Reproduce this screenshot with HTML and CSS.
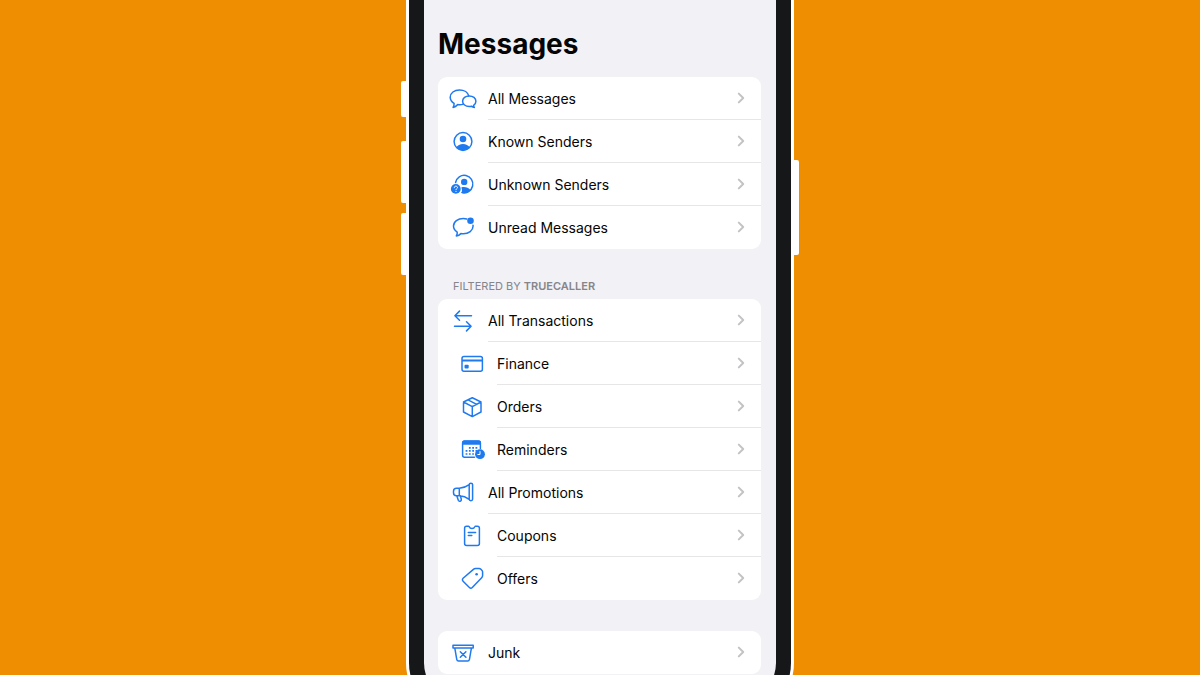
FILE: index.html
```html
<!DOCTYPE html>
<html lang="en">
<head>
<meta charset="utf-8">
<meta name="viewport" content="width=device-width, initial-scale=1">
<title>Messages</title>
<link rel="stylesheet" href="styles.css">
</head>
<body>
<svg class="defs" aria-hidden="true">
  <symbol id="chevron" viewBox="0 0 8 12"><path d="M1.8 1.6 6.2 6 1.8 10.4"/></symbol>
</svg>
<div class="phone">
  <span class="key key-mute"></span>
  <span class="key key-up"></span>
  <span class="key key-down"></span>
  <span class="key key-power"></span>
  <main class="screen">
    <h1 class="title">Messages</h1>

    <nav class="card" aria-label="Messages">
      <a class="row" href="#all">
        <svg class="icon" viewBox="0 0 28 28"><path d="M13.9 19.4c-1 .3-2.1.4-3.2.4-.7 0-1.400-.1-2-.2-1.2 1.2-2.7 2.300-4.600 2.800.8-1.200 1.100-2.700 1-4.100C2.700 16.900 1.200 14.700 1.200 12.200 1.200 8 5.300 4.900 10.500 4.900c4.700 0 8.500 2.500 9.200 6"/><path d="M20.200 10.900c3.800 0 6.700 2.300 6.700 5.300 0 1.700-.9 3.200-2.300 4.200 0 .8.300 1.500.8 2.100-1.200-.2-2.200-.7-3-1.300-.7.200-1.400.3-2.200.3-3.700 0-6.600-2.300-6.600-5.300s2.900-5.300 6.600-5.300z"/></svg>
        <span class="label">All Messages<svg class="chevron"><use href="#chevron"/></svg></span>
      </a>
      <a class="row" href="#known">
        <svg class="icon" viewBox="0 0 28 28"><circle cx="14" cy="13.500" r="8.900"/><circle class="solid" cx="14" cy="11" r="3.300"/><path class="solid" d="M7.300 19.500c1.200-2.200 3.800-3.500 6.700-3.500s5.500 1.300 6.700 3.500a9 9 0 0 1-13.400 0z"/></svg>
        <span class="label">Known Senders<svg class="chevron"><use href="#chevron"/></svg></span>
      </a>
      <a class="row" href="#unknown">
        <svg class="icon" viewBox="0 0 28 28"><path d="M6.600 11.500A8.700 8.700 0 1 1 13 21.500"/><circle class="solid" cx="15.200" cy="10.900" r="3.200"/><path class="solid" d="M12.300 16.400c3.400-.9 7.200.1 9.300 2.900a8.900 8.900 0 0 1-9.200 2.800c.8-1.800.8-3.900-.1-5.700z"/><circle class="solid" cx="6.800" cy="17.900" r="4.900"/><path class="knock" d="M5.300 16.700c0-1 .7-1.500 1.600-1.500s1.600.5 1.600 1.300c0 1-1.500 1.100-1.500 2.200M7 20.300v.3"/></svg>
        <span class="label">Unknown Senders<svg class="chevron"><use href="#chevron"/></svg></span>
      </a>
      <a class="row" href="#unread">
        <svg class="icon" viewBox="0 0 28 28"><path d="M17.700 5c-1.100-.4-2.200-.6-3.400-.6-5.400 0-9.800 3.300-9.800 7.700 0 2.500 1.500 4.700 3.700 6.100.2 1.300-.1 2.600-.9 3.800 2-.4 3.400-1.200 4.600-2.400.8.200 1.600.2 2.400.2 5.400 0 9.800-3.400 9.800-7.700 0-.3 0-.5-.1-.8"/><circle class="solid" cx="21.500" cy="6.700" r="3.300"/></svg>
        <span class="label">Unread Messages<svg class="chevron"><use href="#chevron"/></svg></span>
      </a>
    </nav>

    <h2 class="caption">FILTERED BY <b>TRUECALLER</b></h2>
    <nav class="card" aria-label="Filtered by Truecaller">
      <a class="row" href="#transactions">
        <svg class="icon" viewBox="0 0 28 28"><path d="M22.500 8.700H5.900M10.500 4.100 5.900 8.700l4.600 4.600M5.500 19.300h16.600M17.500 14.700l4.600 4.600-4.600 4.600"/></svg>
        <span class="label">All Transactions<svg class="chevron"><use href="#chevron"/></svg></span>
      </a>
      <a class="row sub" href="#finance">
        <svg class="icon" viewBox="0 0 28 28"><rect x="4" y="6.600" width="20.400" height="14.600" rx="2"/><path class="heavy" d="M4 10.400h20.400"/><rect class="solid" x="6.500" y="14.800" width="4.200" height="3.600" rx="1"/></svg>
        <span class="label">Finance<svg class="chevron"><use href="#chevron"/></svg></span>
      </a>
      <a class="row sub" href="#orders">
        <svg class="icon" viewBox="0 0 28 28"><path d="M14.300 4.800l8.700 4.200v10l-8.700 4.600L5.500 19V9zM5.500 9l8.800 4.600L23 9M14.300 13.600v10M10 6.900l8.700 4.400"/></svg>
        <span class="label">Orders<svg class="chevron"><use href="#chevron"/></svg></span>
      </a>
      <a class="row sub" href="#reminders">
        <svg class="icon" viewBox="0 0 28 28"><path d="M16.500 21.300H6.600a2 2 0 0 1-2-2V7a2 2 0 0 1 2-2h13.800a2 2 0 0 1 2 2v5.500"/><path class="solid" d="M4 8.800V6.500a2 2 0 0 1 2-2h15a2 2 0 0 1 2 2v2.300z"/><path class="dots" d="M10.900 11.800h9M7.600 14.900h12M7.600 18h8.300"/><circle class="solid" cx="22" cy="18.200" r="4.900"/><path class="knock" d="M22 15.600v2.900h-2.200"/></svg>
        <span class="label">Reminders<svg class="chevron"><use href="#chevron"/></svg></span>
      </a>
      <a class="row" href="#promotions">
        <svg class="icon" viewBox="0 0 28 28"><path d="M10.300 9.200H7.500a3 3 0 0 0-3 3v1.500a3 3 0 0 0 3 3h2.800M10.300 9.200v7.500c3.700.2 7 1.400 9.900 3.600V5.600c-2.900 2.200-6.200 3.400-9.900 3.600zM20.200 5.600c0-1.800 3.400-1.800 3.400 0v14.700c0 1.800-3.400 1.800-3.400 0M7.800 16.700l1.500 4.600c.7 1.700 3.400 1 3-1l-.9-3.500"/></svg>
        <span class="label">All Promotions<svg class="chevron"><use href="#chevron"/></svg></span>
      </a>
      <a class="row sub" href="#coupons">
        <svg class="icon" viewBox="0 0 28 28"><path d="M8.600 4.200h1.900c.3 0 .5.200.7.500.4 1 1.500 1.700 2.800 1.700s2.400-.7 2.800-1.700c.1-.3.400-.5.700-.5h1.900a2 2 0 0 1 2 2v15.400a2 2 0 0 1-2 2H8.600a2 2 0 0 1-2-2V6.200a2 2 0 0 1 2-2zM10.300 10.400h7.300M10.300 13.500h3.500"/></svg>
        <span class="label">Coupons<svg class="chevron"><use href="#chevron"/></svg></span>
      </a>
      <a class="row sub" href="#offers">
        <svg class="icon" viewBox="0 0 28 28"><path d="M15.700 4.100c.5-.4 1-.6 1.700-.6h3.700c.8 0 1.300.3 1.800.8l.9.900c.5.500.8 1 .8 1.800v3.600c0 .7-.2 1.300-.7 1.800L14.300 22.500c-.9.900-2 .9-2.900 0l-6.300-6.300c-.9-.9-.9-2.100 0-3z"/><circle class="solid" cx="18.600" cy="9.300" r="1.300"/></svg>
        <span class="label">Offers<svg class="chevron"><use href="#chevron"/></svg></span>
      </a>
    </nav>

    <nav class="card card-junk" aria-label="Junk">
      <a class="row" href="#junk">
        <svg class="icon" viewBox="0 0 28 28"><path d="M4 6.300h20.200v2.800H4zM5.800 9.100l2 11.500c.2.900.8 1.400 1.700 1.400h9.200c.9 0 1.500-.5 1.700-1.400l2-11.500M11.300 12.700l5.600 5.600M16.900 12.700l-5.600 5.600"/></svg>
        <span class="label">Junk<svg class="chevron"><use href="#chevron"/></svg></span>
      </a>
    </nav>
  </main>
</div>
</body>
</html>
```
FILE: styles.css
```css
* {
  box-sizing: border-box;
}

body {
  margin: 0;
  height: 100vh;
  overflow: hidden;
  background: #ee8e00;
  color: #050505;
  font-family: Inter, "Liberation Sans", sans-serif;
}

.defs {
  position: absolute;
  width: 0;
  height: 0;
}

/* Handset: white outline, dark bezel, light screen */
.phone {
  position: relative;
  width: 100%;
  max-width: 388px;
  margin: 0 auto;
  padding: 0 15px 15px;
  border: 3px solid #fff;
  border-top: 0;
  border-radius: 0 0 56px 56px;
  background: #161719;
}

.key {
  position: absolute;
  left: -8px;
  width: 5px;
  background: #fff;
  border-radius: 2px 0 0 2px;
}

.key-mute {
  top: 81px;
  height: 36px;
}

.key-up {
  top: 141px;
  height: 62px;
}

.key-down {
  top: 213px;
  height: 62px;
}

.key-power {
  top: 160px;
  right: -8px;
  left: auto;
  height: 95px;
  border-radius: 0 2px 2px 0;
}

.screen {
  padding: 27px 15px 27px 14px;
  border-radius: 0 0 38px 38px;
  background: #f1f1f6;
}

.title {
  margin: 0 0 16px;
  font-size: 28px;
  font-weight: 700;
  line-height: 34px;
}

.caption {
  margin: 29px 0 5px 15px;
  color: #85858a;
  font-size: 11px;
  font-weight: 400;
  line-height: 16px;
}

.caption b {
  font-weight: 600;
}

.card {
  overflow: hidden;
  border-radius: 9px;
  background: #fff;
}

.card-junk {
  margin-top: 31px;
}

.row {
  display: flex;
  align-items: center;
  height: 43px;
  padding-left: 11px;
  color: inherit;
  font-size: 14px;
  text-decoration: none;
}

.sub {
  padding-left: 20px;
}

.label {
  display: flex;
  flex: 1;
  align-items: center;
  justify-content: space-between;
  align-self: stretch;
  margin-left: 11px;
  padding-right: 16px;
  border-bottom: 1px solid #e6e6e8;
}

.row:last-child .label {
  border-bottom-color: transparent;
}

.icon {
  width: 28px;
  height: 28px;
  fill: none;
  stroke: #1f7af0;
  stroke-width: 1.5;
  stroke-linecap: round;
  stroke-linejoin: round;
}

.icon .solid {
  fill: #1f7af0;
  stroke: none;
}

.icon .heavy {
  stroke-width: 2;
  stroke-linecap: butt;
}

.icon .knock {
  stroke: #fff;
  stroke-width: 1;
}

.icon .dots {
  stroke-width: 1.7;
  stroke-linecap: butt;
  stroke-dasharray: 1.8 1.5;
}

.chevron {
  width: 8px;
  height: 12px;
  fill: none;
  stroke: #c3c3c6;
  stroke-width: 2;
  stroke-linecap: round;
  stroke-linejoin: round;
}
```
